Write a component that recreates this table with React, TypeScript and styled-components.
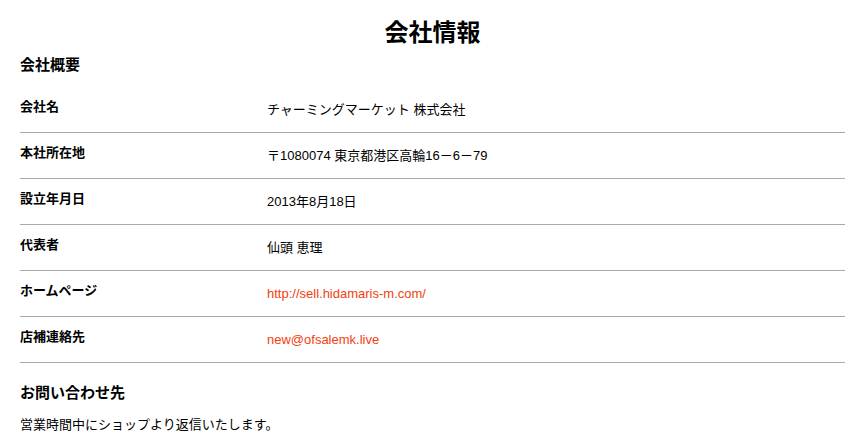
import styled, { createGlobalStyle } from "styled-components";

const GlobalStyle = createGlobalStyle`
  body {
    margin: 0;
    background: #fff;
    color: #000;
    font-family: "Liberation Sans", "Noto Sans CJK JP", sans-serif;
  }
`;

interface I_row {
  label: string;
  value: string;
  link?: boolean;
}

const rows: I_row[] = [
  { label: "会社名", value: "チャーミングマーケット 株式会社" },
  { label: "本社所在地", value: "〒1080074 東京都港区高輪16－6－79" },
  { label: "設立年月日", value: "2013年8月18日" },
  { label: "代表者", value: "仙頭 恵理" },
  { label: "ホームページ", value: "http://sell.hidamaris-m.com/", link: true },
  { label: "店補連絡先", value: "new@ofsalemk.live", link: true },
];

export default function App() {
  return (
    <>
      <GlobalStyle />
      <Page>
        <Title>会社情報</Title>
        <SectionTitle>会社概要</SectionTitle>
        <Table>
          {rows.map((row, index) => (
            <Row key={`${row.label}-${index}`}>
              <Label>{row.label}</Label>
              <Value $link={row.link}>{row.value}</Value>
            </Row>
          ))}
        </Table>
        <SectionTitle $gap={21}>お問い合わせ先</SectionTitle>
        <Note>営業時間中にショップより返信いたします。</Note>
      </Page>
    </>
  );
}

const Page = styled.div`
  padding: 18px 12px 0 20px;
`;

const Title = styled.h1`
  margin: 0;
  font-size: 24px;
  line-height: 29px;
  font-weight: bold;
  text-align: center;
`;

const SectionTitle = styled.h2<{ $gap?: number }>`
  margin: ${(p) => p.$gap ?? 9}px 0 0;
  font-size: 15px;
  line-height: 18px;
  font-weight: bold;
`;

const Table = styled.div`
  margin-top: 13px;
  display: flex;
  flex-direction: column;
`;

const Row = styled.div`
  display: grid;
  grid-template-columns: 247px 1fr;
  align-items: start;
  height: 45px;
  border-bottom: 1px solid #aaaaaa;
`;

const Label = styled.div`
  padding-top: 11px;
  font-size: 13px;
  line-height: 17px;
  font-weight: bold;
`;

const Value = styled.div<{ $link?: boolean }>`
  padding-top: 14px;
  font-size: 13px;
  line-height: 17px;
  color: ${(p) => (p.$link ? "#f2400f" : "#000")};
`;

const Note = styled.p`
  margin: 14px 0 0;
  font-size: 13px;
  line-height: 17px;
`;
